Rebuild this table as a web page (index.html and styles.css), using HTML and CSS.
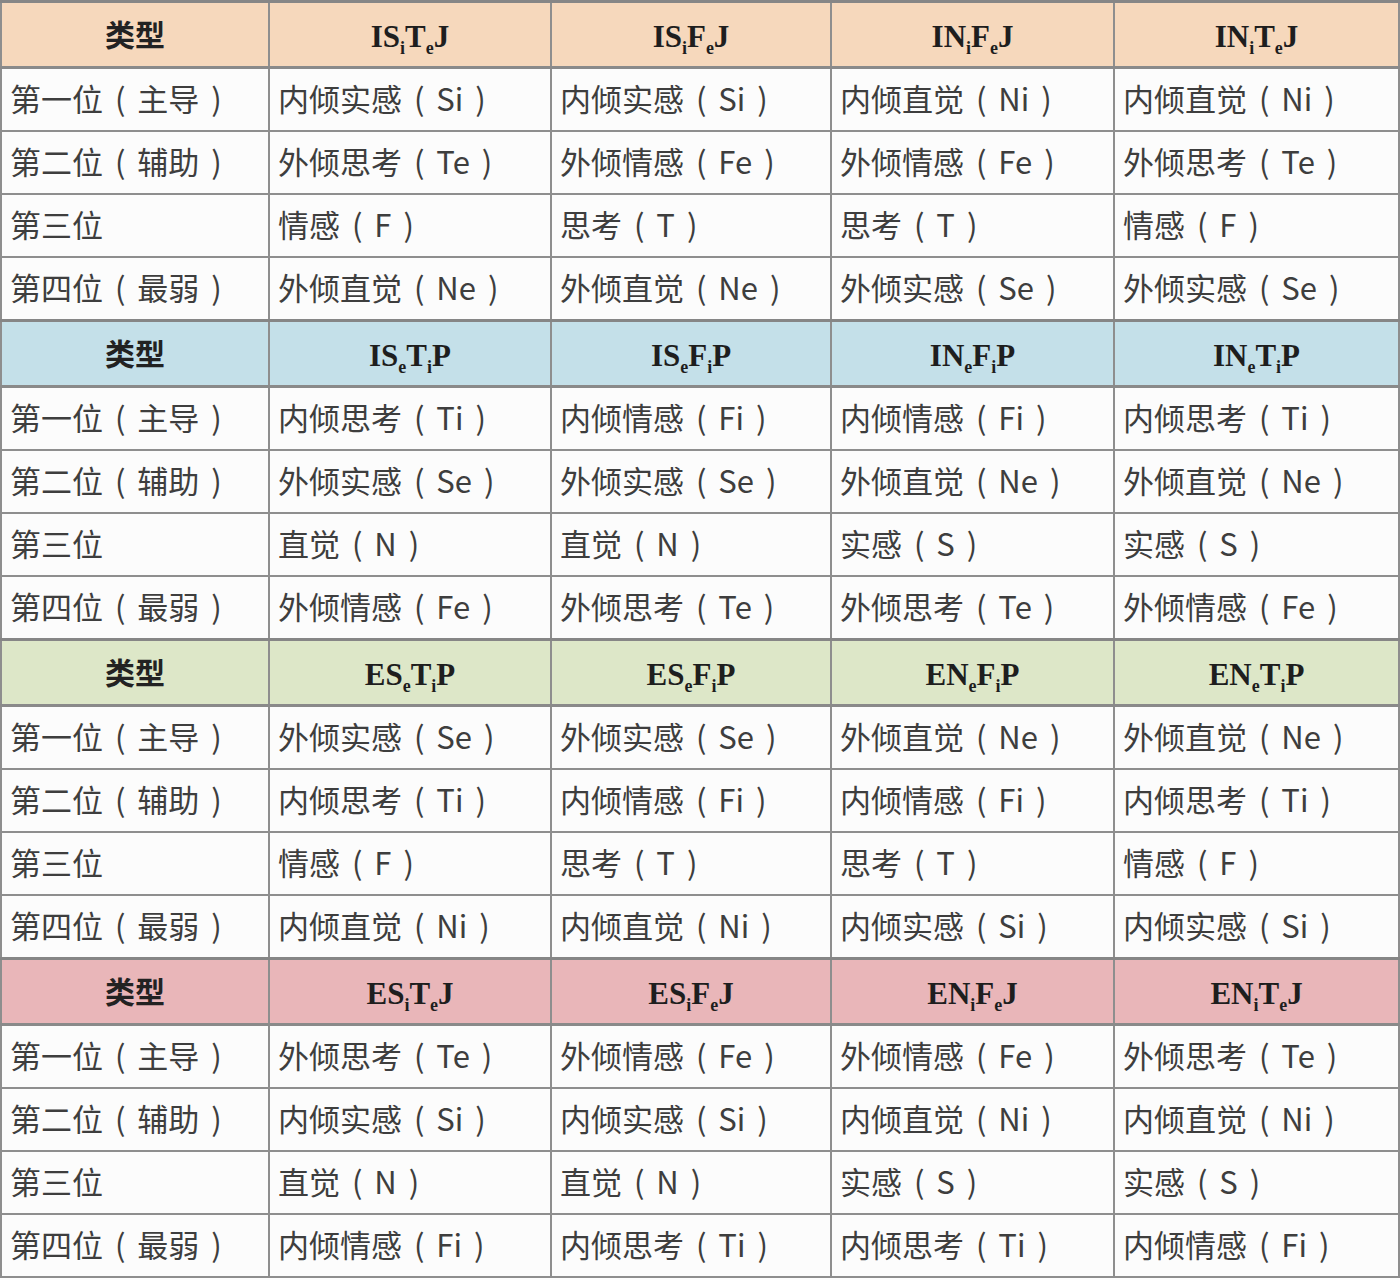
FILE: index.html
```html
<!DOCTYPE html>
<html lang="zh-CN">
<head>
<meta charset="utf-8">
<title>MBTI 功能顺序</title>
<link rel="stylesheet" href="styles.css">
</head>
<body>
<table class="grid">
  <colgroup>
    <col class="c0"><col class="c1"><col class="c2"><col class="c3"><col class="c4">
  </colgroup>
  <tbody>
    <tr class="head peach">
      <th class="kind">类型</th>
      <th>IS<sub>i</sub>T<sub>e</sub>J</th>
      <th>IS<sub>i</sub>F<sub>e</sub>J</th>
      <th>IN<sub>i</sub>F<sub>e</sub>J</th>
      <th>IN<sub>i</sub>T<sub>e</sub>J</th>
    </tr>
    <tr><td>第一位 ( 主导 )</td><td>内倾实感 ( Si )</td><td>内倾实感 ( Si )</td><td>内倾直觉 ( Ni )</td><td>内倾直觉 ( Ni )</td></tr>
    <tr><td>第二位 ( 辅助 )</td><td>外倾思考 ( Te )</td><td>外倾情感 ( Fe )</td><td>外倾情感 ( Fe )</td><td>外倾思考 ( Te )</td></tr>
    <tr><td>第三位</td><td>情感 ( F )</td><td>思考 ( T )</td><td>思考 ( T )</td><td>情感 ( F )</td></tr>
    <tr><td>第四位 ( 最弱 )</td><td>外倾直觉 ( Ne )</td><td>外倾直觉 ( Ne )</td><td>外倾实感 ( Se )</td><td>外倾实感 ( Se )</td></tr>

    <tr class="head blue">
      <th class="kind">类型</th>
      <th>IS<sub>e</sub>T<sub>i</sub>P</th>
      <th>IS<sub>e</sub>F<sub>i</sub>P</th>
      <th>IN<sub>e</sub>F<sub>i</sub>P</th>
      <th>IN<sub>e</sub>T<sub>i</sub>P</th>
    </tr>
    <tr><td>第一位 ( 主导 )</td><td>内倾思考 ( Ti )</td><td>内倾情感 ( Fi )</td><td>内倾情感 ( Fi )</td><td>内倾思考 ( Ti )</td></tr>
    <tr><td>第二位 ( 辅助 )</td><td>外倾实感 ( Se )</td><td>外倾实感 ( Se )</td><td>外倾直觉 ( Ne )</td><td>外倾直觉 ( Ne )</td></tr>
    <tr><td>第三位</td><td>直觉 ( N )</td><td>直觉 ( N )</td><td>实感 ( S )</td><td>实感 ( S )</td></tr>
    <tr><td>第四位 ( 最弱 )</td><td>外倾情感 ( Fe )</td><td>外倾思考 ( Te )</td><td>外倾思考 ( Te )</td><td>外倾情感 ( Fe )</td></tr>

    <tr class="head green">
      <th class="kind">类型</th>
      <th>ES<sub>e</sub>T<sub>i</sub>P</th>
      <th>ES<sub>e</sub>F<sub>i</sub>P</th>
      <th>EN<sub>e</sub>F<sub>i</sub>P</th>
      <th>EN<sub>e</sub>T<sub>i</sub>P</th>
    </tr>
    <tr><td>第一位 ( 主导 )</td><td>外倾实感 ( Se )</td><td>外倾实感 ( Se )</td><td>外倾直觉 ( Ne )</td><td>外倾直觉 ( Ne )</td></tr>
    <tr><td>第二位 ( 辅助 )</td><td>内倾思考 ( Ti )</td><td>内倾情感 ( Fi )</td><td>内倾情感 ( Fi )</td><td>内倾思考 ( Ti )</td></tr>
    <tr><td>第三位</td><td>情感 ( F )</td><td>思考 ( T )</td><td>思考 ( T )</td><td>情感 ( F )</td></tr>
    <tr><td>第四位 ( 最弱 )</td><td>内倾直觉 ( Ni )</td><td>内倾直觉 ( Ni )</td><td>内倾实感 ( Si )</td><td>内倾实感 ( Si )</td></tr>

    <tr class="head pink">
      <th class="kind">类型</th>
      <th>ES<sub>i</sub>T<sub>e</sub>J</th>
      <th>ES<sub>i</sub>F<sub>e</sub>J</th>
      <th>EN<sub>i</sub>F<sub>e</sub>J</th>
      <th>EN<sub>i</sub>T<sub>e</sub>J</th>
    </tr>
    <tr><td>第一位 ( 主导 )</td><td>外倾思考 ( Te )</td><td>外倾情感 ( Fe )</td><td>外倾情感 ( Fe )</td><td>外倾思考 ( Te )</td></tr>
    <tr><td>第二位 ( 辅助 )</td><td>内倾实感 ( Si )</td><td>内倾实感 ( Si )</td><td>内倾直觉 ( Ni )</td><td>内倾直觉 ( Ni )</td></tr>
    <tr><td>第三位</td><td>直觉 ( N )</td><td>直觉 ( N )</td><td>实感 ( S )</td><td>实感 ( S )</td></tr>
    <tr><td>第四位 ( 最弱 )</td><td>内倾情感 ( Fi )</td><td>内倾思考 ( Ti )</td><td>内倾思考 ( Ti )</td><td>内倾情感 ( Fi )</td></tr>
  </tbody>
</table>
</body>
</html>
```

FILE: styles.css
```css
html, body {
  margin: 0;
  padding: 0;
  background: #fdfdfd;
}

.grid {
  width: 1398px;
  border-collapse: collapse;
  table-layout: fixed;
  font-family: "Noto Sans CJK SC", "Noto Sans", sans-serif;
  color: #3e3e3e;
  background: #fcfcfc;
}

.c0 { width: 268px; }
.c1 { width: 282px; }
.c2 { width: 280px; }
.c3 { width: 283px; }
.c4 { width: 285px; }

.grid td,
.grid th {
  border: 2px solid #8e8e8e;
  padding: 0 0 4px 8px;
  height: 57px;
  font-size: 31px;
  line-height: 1;
  white-space: pre;
  word-spacing: 5px;
  overflow: hidden;
  vertical-align: middle;
  text-align: left;
  font-weight: 400;
}

.grid .head th {
  height: 59px;
  text-align: center;
  padding: 4px 0 0 0;
  font-family: "Liberation Serif", "Times New Roman", serif;
  font-weight: 700;
  font-size: 31px;
  word-spacing: 0;
  color: #1e1e1e;
  border-top: 3px solid #868686;
  border-bottom: 3px solid #8a8a8a;
}

.grid .head th.kind {
  font-family: "Noto Sans CJK SC", sans-serif;
  font-size: 30px;
  font-weight: 700;
  padding-top: 0;
  padding-bottom: 4px;
  color: #222;
}

.grid .head sub {
  font-size: 58%;
  vertical-align: -0.4em;
  line-height: 0;
}

.peach th { background: #f6d8bc; }
.blue th { background: #c4e0e9; }
.green th { background: #dde7c8; }
.pink th { background: #e9b6b9; }
```
